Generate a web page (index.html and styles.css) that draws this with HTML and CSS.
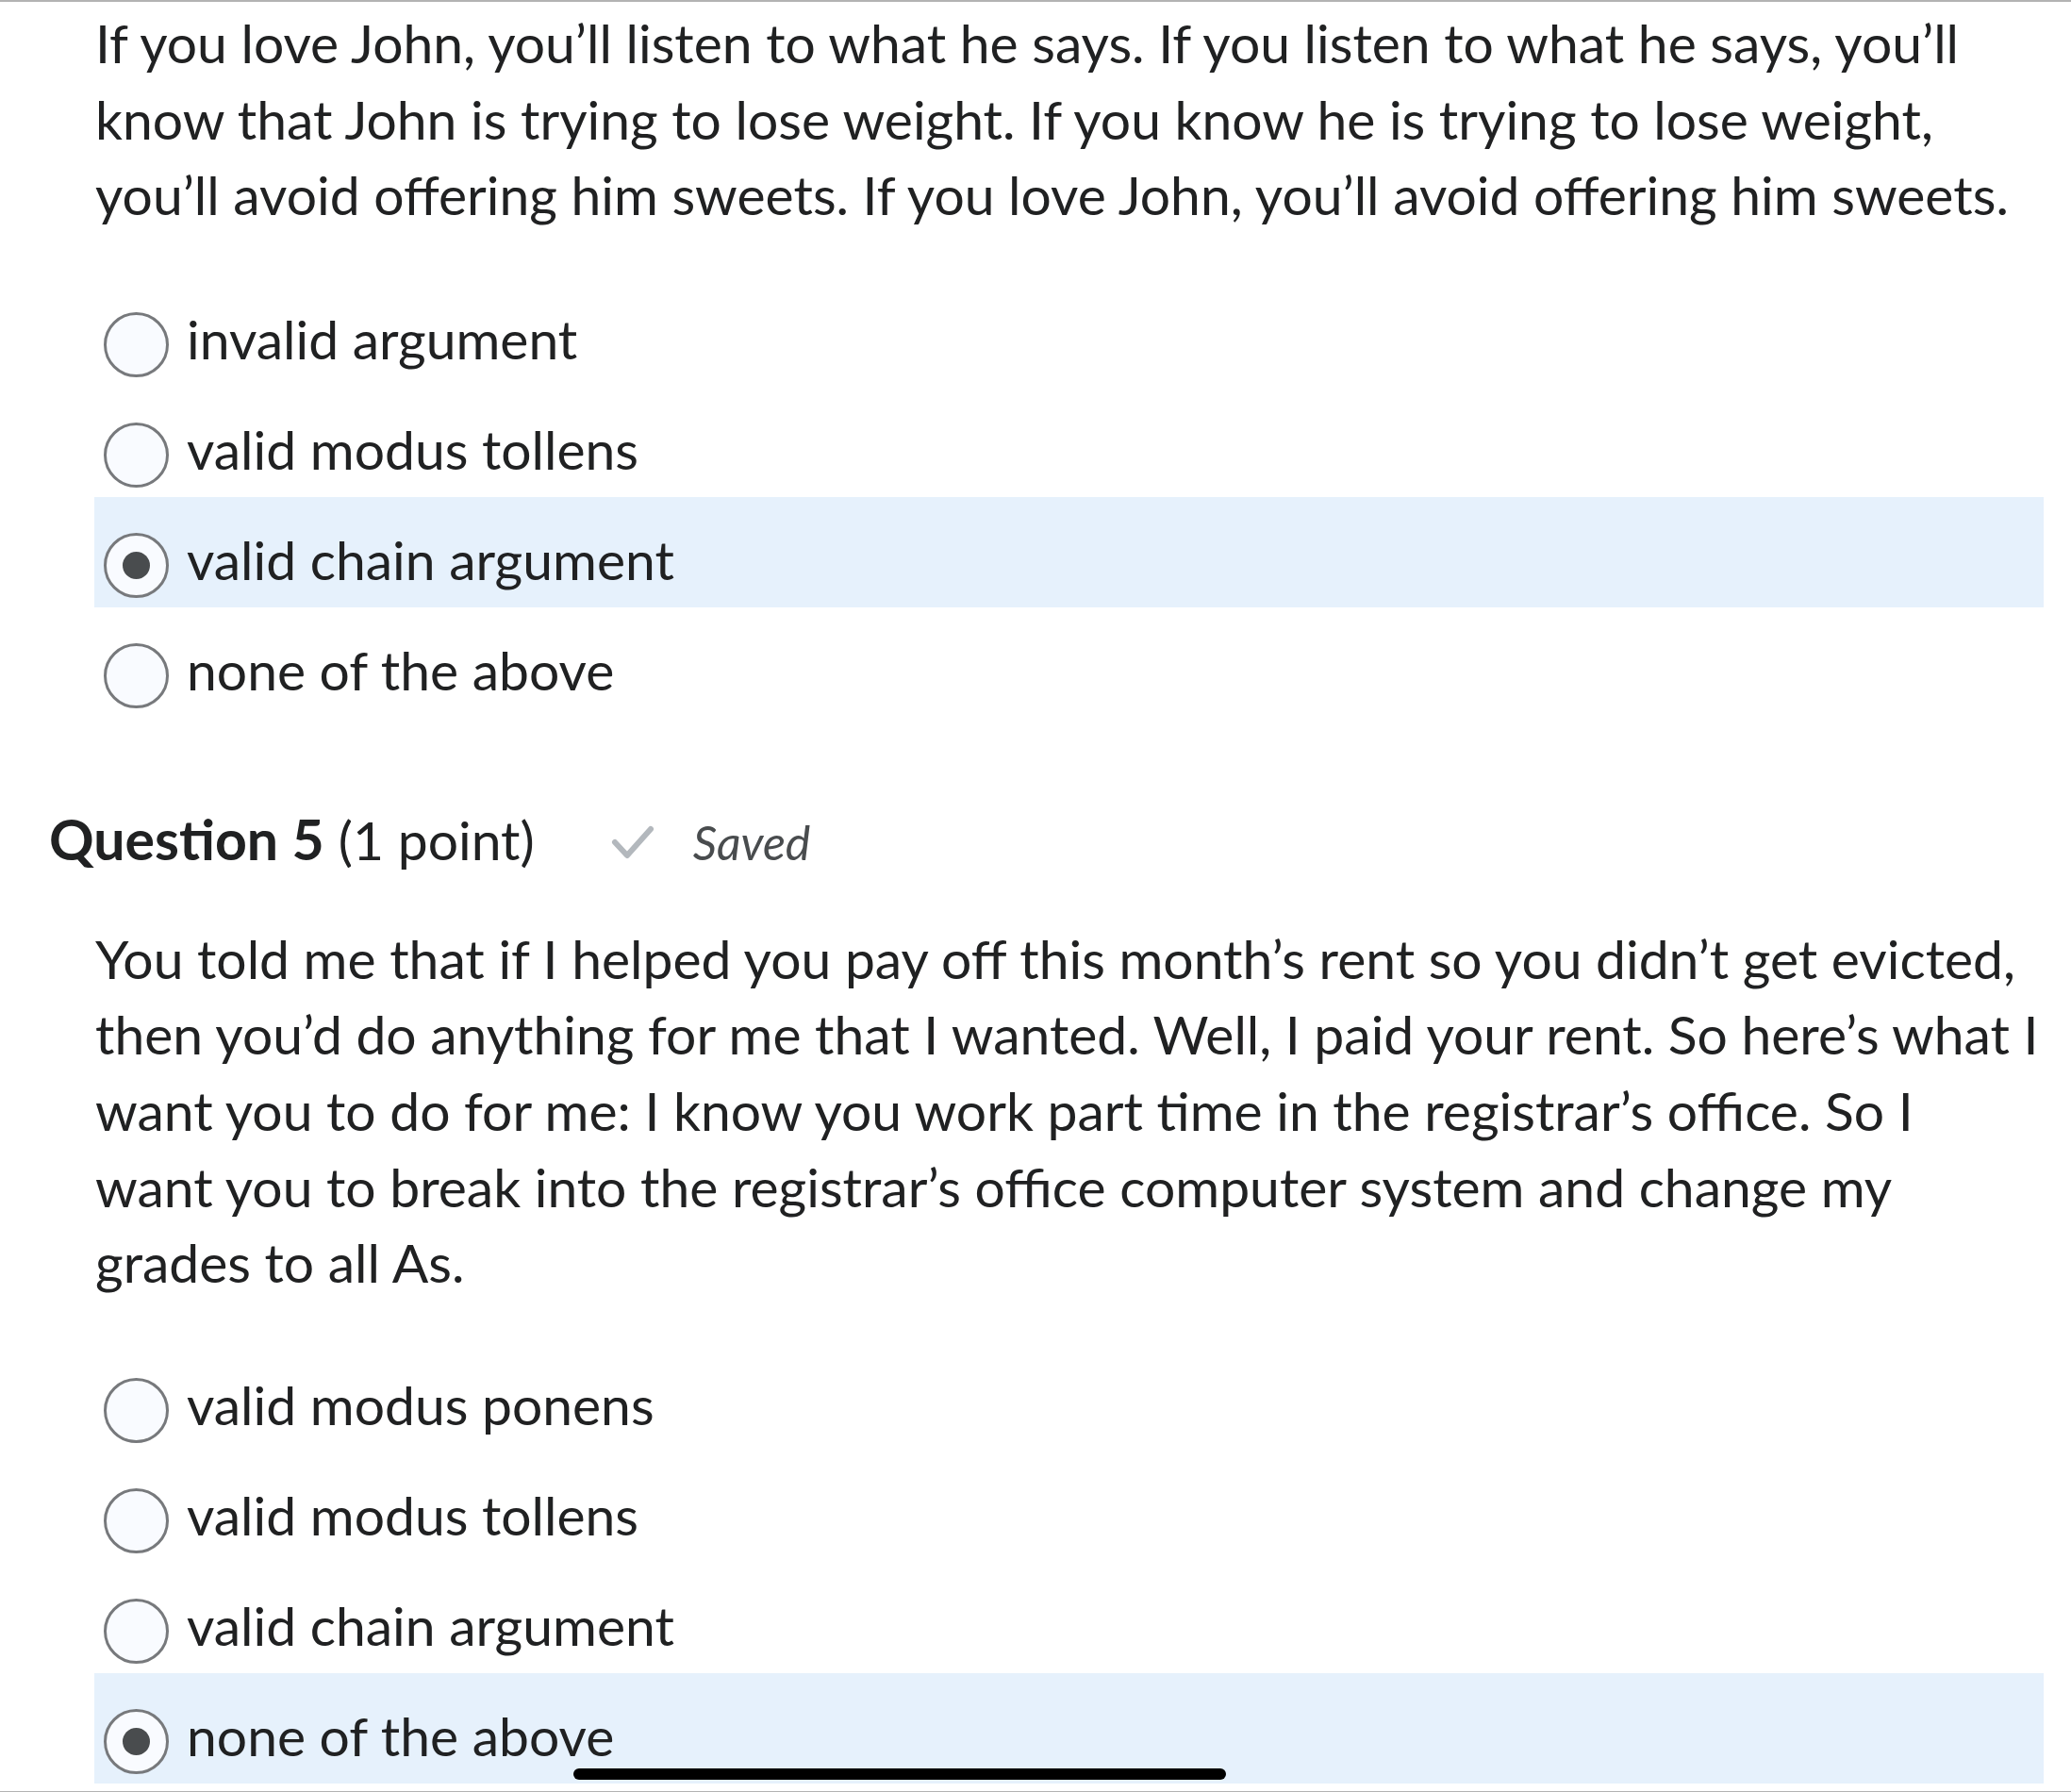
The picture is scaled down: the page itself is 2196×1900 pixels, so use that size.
FILE: index.html
```html
<!DOCTYPE html>
<html lang="en">
<head>
<meta charset="utf-8">
<title>Quiz</title>
<link rel="stylesheet" href="styles.css">
</head>
<body>
<div class="page">
  <section class="question">
    <p class="stem stem-first">If you love John, you’ll listen to what he says. If you listen to what he says, you’ll know that John is trying to lose weight. If you know he is trying to lose weight, you’ll avoid offering him sweets. If you love John, you’ll avoid offering him sweets.</p>
    <ul class="options options-first">
      <li class="option"><span class="radio"></span><span class="label">invalid argument</span></li>
      <li class="option"><span class="radio"></span><span class="label">valid modus tollens</span></li>
      <li class="option selected"><span class="radio"><span class="dot"></span></span><span class="label">valid chain argument</span></li>
      <li class="option"><span class="radio"></span><span class="label">none of the above</span></li>
    </ul>
  </section>

  <section class="question">
    <h2 class="q-head">
      <span class="q-title"><strong>Question 5</strong> <span class="points">(1 point)</span></span>
      <span class="saved">
        <svg class="check" width="48" height="38" viewBox="0 0 48 38"><path d="M5 19 L18 33 L43 5" fill="none" stroke="#b3b8bd" stroke-width="6" stroke-linecap="round" stroke-linejoin="round"/></svg>
        <em>Saved</em>
      </span>
    </h2>
    <p class="stem">You told me that if I helped you pay off this month’s rent so you didn’t get evicted, then you’d do anything for me that I wanted. Well, I paid your rent. So here’s what I want you to do for me: I know you work part time in the registrar’s office. So I want you to break into the registrar’s office computer system and change my grades to all As.</p>
    <ul class="options options-second">
      <li class="option"><span class="radio"></span><span class="label">valid modus ponens</span></li>
      <li class="option"><span class="radio"></span><span class="label">valid modus tollens</span></li>
      <li class="option"><span class="radio"></span><span class="label">valid chain argument</span></li>
      <li class="option selected"><span class="radio"><span class="dot"></span></span><span class="label">none of the above</span></li>
    </ul>
  </section>
  <div class="bottom-rule"></div>
  <div class="home-indicator"></div>
</div>
</body>
</html>
```

FILE: styles.css
```css
html, body {
  margin: 0;
  padding: 0;
  background: #ffffff;
}

.page {
  position: relative;
  width: 2196px;
  height: 1900px;
  overflow: hidden;
  border-top: 2px solid #b3b3b3;
  box-sizing: border-box;
  font-family: Lato, "Open Sans", "Liberation Sans", sans-serif;
  color: #202122;
}

.question {
  display: flex;
  flex-direction: column;
}

.stem {
  margin: 0;
  padding: 0 31px 0 101px;
  font-size: 57px;
  line-height: 80.6px;
}

.stem-first {
  margin-top: 3px;
}

.options {
  list-style: none;
  margin: 0;
  padding: 0 29px 0 100px;
}

.options-first {
  margin-top: 46px;
}

.options-second {
  margin-top: 44px;
}

.option {
  display: flex;
  align-items: flex-start;
  height: 117px;
  padding-left: 10px;
  box-sizing: border-box;
}

.option.selected {
  background: #e6f1fc;
}

.radio {
  flex: none;
  width: 69px;
  height: 69px;
  margin-top: 38px;
  border: 3px solid #77797c;
  border-radius: 50%;
  background: #f9fbff;
  box-sizing: border-box;
  display: flex;
  align-items: center;
  justify-content: center;
}

.dot {
  width: 29px;
  height: 29px;
  border-radius: 50%;
  background: #494c4e;
}

.label {
  margin-left: 19px;
  margin-top: 31px;
  font-size: 57px;
  line-height: 70px;
}

.q-head {
  display: flex;
  align-items: baseline;
  margin: 94px 0 48px 0;
  padding-left: 52px;
  font-size: 59px;
  line-height: 70px;
  font-weight: 400;
}

.q-title strong {
  font-weight: 700;
}

.points {
  font-size: 57px;
}

.saved {
  display: flex;
  align-items: baseline;
  margin-left: 80px;
}

.check {
  align-self: center;
  margin-right: 40px;
}

.saved em {
  font-size: 50px;
  color: #494c4e;
  font-style: italic;
}

.bottom-rule {
  margin-top: 8px;
  border-top: 3px solid #b3b3b3;
}

.home-indicator {
  position: absolute;
  left: 608px;
  top: 1873px;
  width: 692px;
  height: 12px;
  border-radius: 6px;
  background: #000000;
}
```
